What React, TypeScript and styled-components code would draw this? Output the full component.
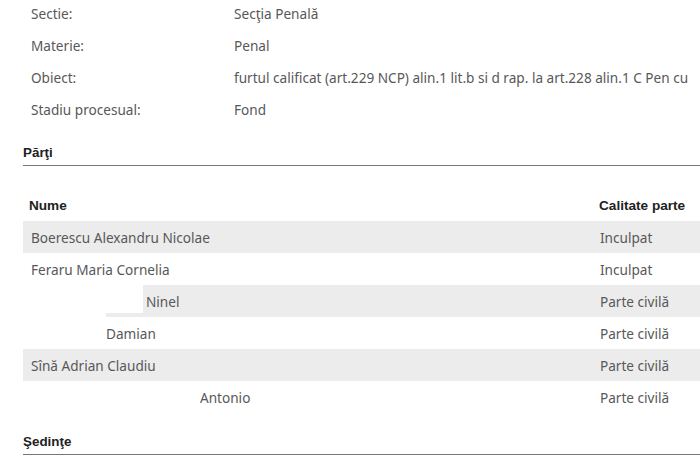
import React from 'react'
import styled, { createGlobalStyle } from 'styled-components'

const GlobalStyle = createGlobalStyle`
  html, body {
    margin: 0;
    padding: 0;
    background: #fff;
    overflow: hidden;
  }
  body {
    width: 700px;
    height: 463px;
  }
`

const Page = styled.div`
  width: 700px;
  height: 463px;
  overflow: hidden;
`

const InfoList = styled.div`
  margin-top: -3px;
  padding-left: 31px;
`

const InfoRow = styled.div`
  display: grid;
  grid-template-columns: 203px 1fr;
  height: 32px;
  align-items: center;
  font-family: 'Noto Sans', 'Open Sans', sans-serif;
  font-size: 13.6px;
  color: #585858;
  white-space: nowrap;
`

const Section = styled.div`
  padding-left: 23px;
`

const SectionTitle = styled.div<{ top: number }>`
  margin-top: ${({ top }) => top}px;
  font-family: 'Liberation Sans', Arial, sans-serif;
  font-weight: bold;
  font-size: 13.4px;
  color: #222;
  line-height: 16px;
  padding-bottom: 4px;
  border-bottom: 1px solid #777;
`

const Table = styled.div`
  margin-top: 23px;
`

const Row = styled.div<{ striped?: boolean }>`
  position: relative;
  display: grid;
  grid-template-columns: 570px 1fr;
  height: 32px;
  align-items: center;
  background: ${({ striped }) => (striped ? '#ececec' : 'transparent')};
`

const HeadCell = styled.div`
  padding-left: 6px;
  font-family: 'Liberation Sans', Arial, sans-serif;
  font-weight: bold;
  font-size: 13.6px;
  color: #222;
`

const Cell = styled.div<{ indent?: number }>`
  position: relative;
  padding-left: ${({ indent }) => 8 + (indent || 0)}px;
  font-family: 'Noto Sans', 'Open Sans', sans-serif;
  font-size: 13.6px;
  color: #585858;
  white-space: nowrap;
`

const RoleCell = styled(Cell)`
  padding-left: 7px;
`

// white boxes hiding surnames in the screenshot
const Redact = styled.span<{ w: number; t: number; h: number }>`
  position: absolute;
  left: -23px;
  top: ${({ t }) => t}px;
  width: ${({ w }) => w}px;
  height: ${({ h }) => h}px;
  background: #fff;
`

const info = [
  ['Sectie:', 'Secţia Penală'],
  ['Materie:', 'Penal'],
  ['Obiect:', 'furtul calificat (art.229 NCP) alin.1 lit.b si d rap. la art.228 alin.1 C Pen cu'],
  ['Stadiu procesual:', 'Fond'],
]

const parti = [
  { name: 'Boerescu Alexandru Nicolae', role: 'Inculpat', indent: 0 },
  { name: 'Feraru Maria Cornelia', role: 'Inculpat', indent: 0 },
  { name: 'Ninel', role: 'Parte civilă', indent: 115, redact: true },
  { name: 'Damian', role: 'Parte civilă', indent: 75 },
  { name: 'Sînă Adrian Claudiu', role: 'Parte civilă', indent: 0 },
  { name: 'Antonio', role: 'Parte civilă', indent: 169 },
]

const App = () => {
  return (
    <Page>
      <GlobalStyle />
      <InfoList>
        {info.map(([label, value]) => (
          <InfoRow key={label}>
            <span>{label}</span>
            <span>{value}</span>
          </InfoRow>
        ))}
      </InfoList>
      <Section>
        <SectionTitle top={20}>Părţi</SectionTitle>
        <Table>
          <Row>
            <HeadCell>Nume</HeadCell>
            <HeadCell>Calitate parte</HeadCell>
          </Row>
          {parti.map((p, i) => (
            <Row key={p.name} striped={i % 2 === 0}>
              {p.redact && (
                <>
                  <Redact w={143} t={0} h={28} />
                  <Redact w={106} t={28} h={4} />
                </>
              )}
              <Cell indent={p.indent}>{p.name}</Cell>
              <RoleCell>{p.role}</RoleCell>
            </Row>
          ))}
        </Table>
        <SectionTitle top={21}>Şedinţe</SectionTitle>
      </Section>
    </Page>
  )
}

export default App
